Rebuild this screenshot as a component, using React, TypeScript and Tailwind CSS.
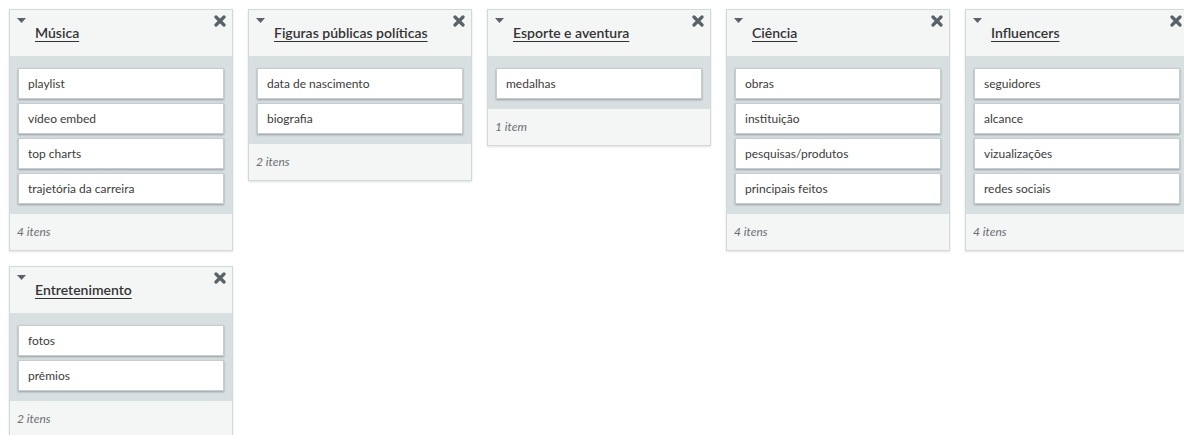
import React from "react";

type Group = { title: string; items: string[] };

const row1: Group[] = [
  { title: "Música", items: ["playlist", "vídeo embed", "top charts", "trajetória da carreira"] },
  { title: "Figuras públicas políticas", items: ["data de nascimento", "biografia"] },
  { title: "Esporte e aventura", items: ["medalhas"] },
  { title: "Ciência", items: ["obras", "instituição", "pesquisas/produtos", "principais feitos"] },
  { title: "Influencers", items: ["seguidores", "alcance", "vizualizações", "redes sociais"] },
];

const row2: Group[] = [{ title: "Entretenimento", items: ["fotos", "prêmios"] }];

function CloseIcon() {
  return (
    <svg width="12" height="12" viewBox="0 0 12 12" className="block">
      <path d="M2 2 L10 10 M10 2 L2 10" stroke="#5a6267" strokeWidth="3.2" strokeLinecap="round" />
    </svg>
  );
}

function Caret() {
  return (
    <svg width="9" height="5" viewBox="0 0 9 5" className="block">
      <path d="M0 0 H9 L4.5 5 Z" fill="#5a6267" />
    </svg>
  );
}

function Card({ group }: { group: Group }) {
  const n = group.items.length;
  return (
    <div className="w-[224px] border border-[#d3d9db] bg-[#f4f6f6] shadow-[0_1px_2px_rgba(0,0,0,0.12)]">
      <div className="relative h-[46px] bg-[#f4f6f6]">
        <div className="absolute left-[7px] top-[8px]">
          <Caret />
        </div>
        <div className="absolute right-[6px] top-[5px]">
          <CloseIcon />
        </div>
        <div className="pl-[25px] pt-[14px] text-[14px] font-semibold leading-[18px] text-[#333] underline underline-offset-[3px] decoration-[1px]">
          {group.title}
        </div>
      </div>
      <div className="flex flex-col gap-[4px] bg-[#d8dfe1] px-[8px] pt-[12px] pb-[10px]">
        {group.items.map((it) => (
          <div
            key={it}
            className="flex h-[31px] items-center border border-[#c6cccf] bg-white pl-[9px] text-[12px] text-[#3b3b3b] shadow-[0_1px_2px_rgba(0,0,0,0.3)]"
          >
            {it}
          </div>
        ))}
      </div>
      <div className="flex h-[36px] items-center pl-[7px] text-[12px] italic text-[#6a6e71]">
        {n} {n === 1 ? "item" : "itens"}
      </div>
    </div>
  );
}

export default function App() {
  return (
    <div
      className="h-[435px] w-[1184px] overflow-hidden bg-white"
      style={{ fontFamily: "Lato, 'Open Sans', Arial, sans-serif" }}
    >
      <div className="flex w-[1220px] flex-col gap-[15px] pl-[9px] pt-[9px]">
        <div className="flex items-start gap-[15px]">
          {row1.map((g) => (
            <Card key={g.title} group={g} />
          ))}
        </div>
        <div className="flex items-start gap-[15px]">
          {row2.map((g) => (
            <Card key={g.title} group={g} />
          ))}
        </div>
      </div>
    </div>
  );
}
